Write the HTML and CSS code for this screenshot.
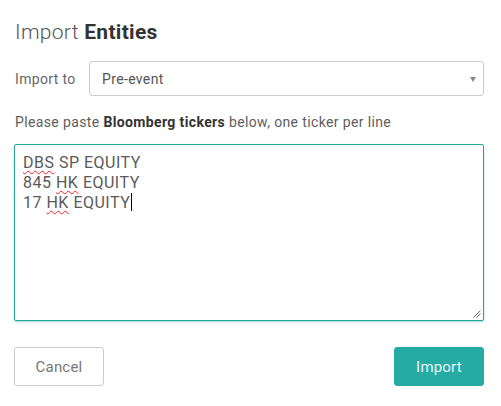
FILE: index.html
```html
<!DOCTYPE html>
<html>
<head>
<meta charset="utf-8">
<link rel="stylesheet" href="styles.css">
</head>
<body>
<div class="dialog">
  <h1 class="title">Import <b>Entities</b></h1>
  <div class="row">
    <span class="label">Import to</span>
    <div class="select">
      <span>Pre-event</span>
      <span class="arrow"></span>
    </div>
  </div>
  <p class="hint">Please paste <b>Bloomberg tickers</b> below, one ticker per line</p>
  <div class="textarea">
    <div class="line"><span class="sp">DBS</span> SP EQUITY</div>
    <div class="line">845 <span class="sp">HK</span> EQUITY</div>
    <div class="line">17 <span class="sp">HK</span> EQUITY<span class="caret"></span></div>
    <svg class="grip" width="9" height="9" viewBox="0 0 9 9"><path d="M8.5 1.5 L1.5 8.5 M8.5 4.5 L4.5 8.5" stroke="#666" stroke-width="1" fill="none"/></svg>
  </div>
  <div class="actions">
    <button class="btn cancel">Cancel</button>
    <button class="btn primary">Import</button>
  </div>
</div>
</body>
</html>
```
FILE: styles.css
```css
html, body { margin: 0; padding: 0; background: #fff; }
body { font-family: Roboto, "Noto Sans", sans-serif; color: #555; }
.dialog { padding: 19px 17px 0 14px; width: 470px; }
.title { margin: 0 0 0 1px; font-size: 21px; font-weight: 300; color: #555; line-height: 26px; letter-spacing: 0.3px; }
.title b { font-weight: 700; color: #333; }
.row { display: flex; align-items: center; margin-top: 16px; }
.label { width: 74px; font-size: 14px; color: #666; padding-left: 1px; letter-spacing: 0.35px; }
.select { flex: 1; height: 33px; border: 1px solid #ccc; border-radius: 3px; display: flex; align-items: center; justify-content: space-between; padding: 0 7px 0 12px; font-size: 14px; color: #555; letter-spacing: 0.35px; }
.arrow { width: 0; height: 0; border-left: 3.5px solid transparent; border-right: 3.5px solid transparent; border-top: 5px solid #888; margin-top: 1px; }
.hint { margin: 16px 0 0 1px; font-size: 14px; color: #5e5e5e; line-height: 20px; letter-spacing: 0.37px; }
.hint b { color: #333; font-weight: 700; }
.textarea { position: relative; margin-top: 12px; height: 177px; border: 1px solid #26a69a; border-radius: 2px; box-shadow: 0 1px 2px rgba(38,166,154,0.45); padding: 8px 8px 5px; box-sizing: border-box; font-size: 16px; line-height: 20px; color: #5a5a5a; letter-spacing: 0.5px; }
.sp { text-decoration: underline wavy #e22; text-decoration-thickness: 1px; text-underline-offset: 2px; }
.caret { display: inline-block; width: 1px; height: 18px; background: #000; vertical-align: -3px; margin-left: 1px; }
.grip { position: absolute; right: 2px; bottom: 2px; }
.actions { display: flex; justify-content: space-between; margin-top: 26px; }
.btn { width: 90px; height: 39px; font-family: Roboto, "Noto Sans", sans-serif; font-size: 15px; border-radius: 3px; letter-spacing: 0.2px; }
.cancel { background: #fff; border: 1px solid #ccc; color: #777; }
.primary { background: #26aba4; border: 1px solid #26aba4; color: #e6f6f5; }
```
